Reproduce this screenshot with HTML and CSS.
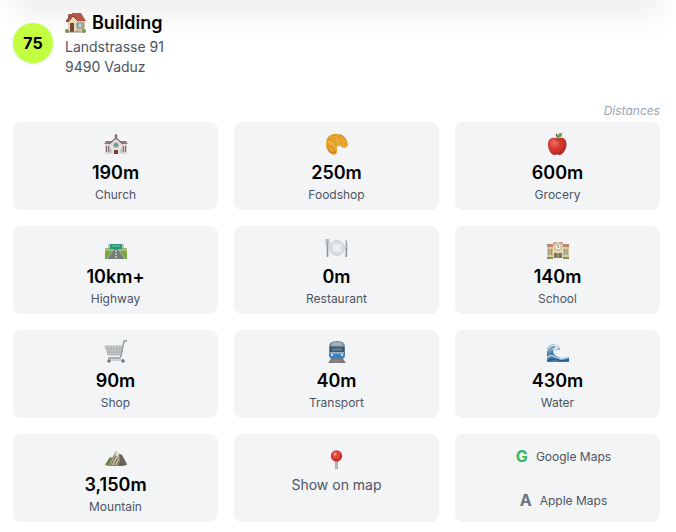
FILE: index.html
```html
<!DOCTYPE html>
<html lang="en">
<head>
<meta charset="utf-8">
<meta name="viewport" content="width=device-width, initial-scale=1">
<title>Building</title>
<link rel="stylesheet" href="styles.css">
</head>
<body>
<div class="top-edge"></div>
<main class="page">
  <header class="building">
    <div class="score">75</div>
    <div>
      <h1 class="title">
        <svg class="house" viewBox="0 0 22 22" aria-hidden="true">
          <path d="M3 2h3v5H3z" fill="#a86a58"/>
          <path d="M3 9 8 3l5 6v11H3z" fill="#ead8b3"/>
          <path d="M12 9h8v10l-7 1z" fill="#d8c397"/>
          <path d="M8 1h8l5 8h-8L8 4l-5 6-2-1z" fill="#b75549"/>
          <path d="M8 1 1 9l2 1 5-6 5 5" fill="none" stroke="#7d3834"/>
          <path d="M5 11h4v9H5z" fill="#76483a"/>
          <path d="M12 11h6v5h-6z" fill="#9eb7bd" stroke="#718c95"/>
          <path d="M15 11v5" stroke="#e0e6dc"/>
          <path d="M2 20h17" stroke="#92877a"/>
          <circle cx="2" cy="19" r="2" fill="#719552"/><circle cx="19" cy="19" r="2" fill="#719552"/><circle cx="12" cy="19" r="1" fill="#91a366"/>
        </svg>
        Building
      </h1>
      <address class="address">Landstrasse 91<br>9490 Vaduz</address>
    </div>
  </header>
  <p class="caption">Distances</p>
  <section class="grid" aria-label="Distances">
    <div class="card">
      <svg class="icon" viewBox="0 0 24 24" aria-hidden="true">
        <path d="M1 12h22v10H1z" fill="#ddd6d2"/>
        <path d="M0 12 2 9h20l2 3z" fill="#8d7d81"/>
        <path d="M6 12l6-6 6 6v10H6z" fill="#e6e1dc"/>
        <path d="m5 12 7-6 7 6" fill="none" stroke="#806c70" stroke-width="1.300"/>
        <path d="M12 2v5M10.500 4h3" stroke="#5d4e55" stroke-width="1.2"/>
        <circle cx="12" cy="13" r="2.600" fill="#719d91" stroke="#b9c4bd"/>
        <path d="M10 18h4v4h-4z" fill="#74433b"/>
        <path d="M2.500 14v6M4.800 14v6M19.200 14v6M21.500 14v6" stroke="#77646a" stroke-width="1.1"/>
        <path d="M7 17v4M17 17v4" stroke="#bba9a1"/>
      </svg>
      <strong class="value">190m</strong><span class="label">Church</span>
    </div>
    <div class="card">
      <svg class="icon" viewBox="0 0 24 24" aria-hidden="true">
        <path d="M9 23C4 22 0 16 1 11 1 5 6 1 12 2c6-1 11 5 11 11-1 3-4 4-6 2-2-1-4-2-5 0-1 3 2 6-3 8z" fill="#e7a42d"/>
        <path d="M2 8c4-2 7 0 9 5l-1 3C8 12 5 10 1 11M8 3c5-1 8 3 8 10l-3-1C13 7 11 4 8 3m8 0c5 2 6 6 5 11l-3 1c1-5 1-9-2-12" fill="#f0b441"/>
        <path d="M2 8c5-1 7 2 9 6M8 3c5 0 7 4 7 9M15 3c5 2 6 6 5 11M2 15c4-2 7 1 8 5" fill="none" stroke="#c78225" stroke-width=".9"/>
        <path d="M3 17c2 4 5 4 8 3" fill="none" stroke="#c98023" stroke-width="1.5"/>
      </svg>
      <strong class="value">250m</strong><span class="label">Foodshop</span>
    </div>
    <div class="card">
      <svg class="icon" viewBox="0 0 24 24" aria-hidden="true">
        <defs><radialGradient id="apple" cx=".35" cy=".3" r=".75"><stop offset="0" stop-color="#ef7164"/><stop offset=".45" stop-color="#d9392f"/><stop offset="1" stop-color="#b02723"/></radialGradient></defs>
        <path d="M11.500 7c4-3 9.500-1 9 6-.4 5-4 10-7 10-1 0-1.500-.6-2.500-.6s-1.500.6-2.500.6C5.500 23 2 18 2 13 1.500 6 7.500 4 11.500 7z" fill="url(#apple)"/>
        <path d="M8 7q4 3 7 0-3 1-7 0" fill="#942a22"/>
        <path d="M11.500 8q0-4-1.500-6" fill="none" stroke="#725034" stroke-width="1.300"/>
        <path d="M11 6c0-4 2-5 5-5 0 3-1 5-5 5z" fill="#63a747"/>
      </svg>
      <strong class="value">600m</strong><span class="label">Grocery</span>
    </div>
    <div class="card">
      <svg class="icon" viewBox="0 0 24 24" aria-hidden="true">
        <path d="M1 12h22v11H1z" fill="#78a744"/>
        <path d="M1 12h22v3H1z" fill="#a4bd79"/>
        <path d="M10 13h4l7 10H3z" fill="#747b7b"/>
        <path d="M12 14v9" stroke="#ece6cf" stroke-width="1.200" stroke-dasharray="2 1"/>
        <path d="M10 13 3 23M14 13l7 10" stroke="#bec3b1" stroke-width=".7"/>
        <path d="M5 14V8M19 14V8" stroke="#879a91"/>
        <path d="M6 8h12v5H6z" fill="#299579"/><path d="M8 10h8" stroke="#80c4af"/>
      </svg>
      <strong class="value">10km+</strong><span class="label">Highway</span>
    </div>
    <div class="card">
      <svg class="icon" viewBox="0 0 24 24" aria-hidden="true">
        <circle cx="12" cy="12" r="7.300" fill="#e1e3e5" stroke="#c3c7cb"/>
        <circle cx="12" cy="12" r="4.800" fill="#eceeef" stroke="#ced1d4" stroke-width=".8"/>
        <path d="M2.500 8v13" stroke="#9196a0" stroke-width="1.700"/>
        <path d="M1 3v5q1.500 2 3 0V3M2.500 3v5" fill="none" stroke="#9a9fa8" stroke-width=".9"/>
        <path d="M20.500 3q2 1 2 10h-2z" fill="#a5aab2"/><path d="M21.300 12v9" stroke="#9095a0" stroke-width="1.700"/>
      </svg>
      <strong class="value">0m</strong><span class="label">Restaurant</span>
    </div>
    <div class="card">
      <svg class="icon" viewBox="0 0 24 24" aria-hidden="true">
        <path d="M1 10h22v12H1z" fill="#dcc798"/>
        <path d="M1 8h6l1-2h8l1 2h6v3H1z" fill="#c18372"/>
        <path d="M7 9q5-6 10 0v13H7z" fill="#e6d6ad"/>
        <circle cx="12" cy="11" r="3.300" fill="#f4f1df" stroke="#beb08d"/>
        <path d="M12 9v2l1 1" fill="none" stroke="#625e51" stroke-width=".8"/>
        <path d="M3 13v6M5.500 13v6M18.500 13v6M21 13v6" stroke="#87958b" stroke-width="1.300"/>
        <path d="M8 17h8v5H8z" fill="#7b7463"/><path d="M12 17v5" stroke="#c8b182"/>
        <path d="M1 22h6M17 22h6" stroke="#819356" stroke-width="2"/>
      </svg>
      <strong class="value">140m</strong><span class="label">School</span>
    </div>
    <div class="card">
      <svg class="icon" viewBox="0 0 24 24" aria-hidden="true">
        <path d="M1 6h18l-2 9H4z" fill="#c9cccd"/>
        <path d="M1 6h18l-2 9H4zM4 6l2 9M7 6l1 9M10 6v9M13 6v9M16 6l-1 9M2 9h16M3 12h15" fill="none" stroke="#a6aaad" stroke-width=".7"/>
        <path d="M23 1h-3l-3 15-1 2H4" fill="none" stroke="#92969a" stroke-width="1.300"/>
        <path d="M4 20h16" stroke="#aaaeb2"/><circle cx="5" cy="21" r="1.800" fill="#74777b"/><circle cx="19" cy="21" r="1.800" fill="#74777b"/>
      </svg>
      <strong class="value">90m</strong><span class="label">Shop</span>
    </div>
    <div class="card">
      <svg class="icon" viewBox="0 0 24 24" aria-hidden="true">
        <path d="m7 17-4 6h18l-4-6z" fill="#92857d"/><path d="M7 19h10M5 22h14" stroke="#77706e"/>
        <path d="M8 17 5 23M16 17l3 6" stroke="#6e7175"/>
        <path d="M4 7q0-6 8-6t8 6v8q0 3-3 4H7q-3-1-3-4z" fill="#687c91"/>
        <path d="M6 6q0-3 3-4h6q3 1 3 4" fill="#a1afba"/>
        <path d="M5 7h14v5H5z" fill="#3d566c"/><path d="M7 8h10v3H7z" fill="#56778d"/>
        <path d="M4 13h16v2q0 2-3 3H7q-3-1-3-3z" fill="#397fc3"/>
        <path d="M5 13h14" stroke="#c6dcea"/><path d="M6 15h2M16 15h2" stroke="#fff" stroke-width="1.300"/>
      </svg>
      <strong class="value">40m</strong><span class="label">Transport</span>
    </div>
    <div class="card">
      <svg class="icon" viewBox="0 0 24 24" aria-hidden="true">
        <path d="M1 22V9q3-6 9-4 4 1 4 5l-2-1-1 2-2-2q-3 2-1 5 3 4 9 4l6-1v5z" fill="#437dab"/>
        <path d="M1 10q3-6 8-5 4 0 5 4l-2-1-1 3-2-2-2 2-1-1-2 3-2-1z" fill="#d5e5ed"/>
        <path d="M2 12q2-5 7-5M3 16q-1-4 4-7" fill="none" stroke="#608eb2" stroke-width="1.400"/>
        <path d="M1 18q4-5 9 0 5 2 13-1" fill="none" stroke="#b7d6e5" stroke-width="1.700"/>
        <path d="M2 21q7-4 13 0l8-1" fill="none" stroke="#245a8c" stroke-width="1.500"/>
      </svg>
      <strong class="value">430m</strong><span class="label">Water</span>
    </div>
    <div class="card">
      <svg class="icon" viewBox="0 0 24 24" aria-hidden="true">
        <path d="m1 21 5-8 2 1 4-7 3 3 3 1 5 9-4 2H4z" fill="#8b846f"/>
        <path d="m12 7-2 6-5 8h7l3-5 1-6z" fill="#c9baa1"/>
        <path d="m15 10 3 1 5 10-9 1 2-5z" fill="#66645a"/>
        <path d="m1 21 5-8 2 1-2 8z" fill="#7a9159"/>
        <path d="m7 21 5-9M10 21l4-7M3 20l3-5" stroke="#626d4e" stroke-width="1"/>
        <path d="m12 7 1 5 2-2" fill="#eee9df"/>
      </svg>
      <strong class="value">3,150m</strong><span class="label">Mountain</span>
    </div>
    <button class="card map-card" type="button">
      <svg class="icon" viewBox="0 0 24 24" aria-hidden="true">
        <path d="M11.500 12v9" stroke="#8f9499" stroke-width="2.400"/><path d="M11.500 12v9" stroke="#c1c4c7" stroke-width=".7"/>
        <circle cx="11.500" cy="8" r="5.700" fill="#c7302b"/><circle cx="11" cy="7" r="4" fill="#df4a40"/><circle cx="10" cy="6" r="1.500" fill="#f3a098"/>
      </svg>
      <span class="map-text">Show on map</span>
    </button>
    <div class="card links">
      <a class="link" href="#google"><b class="google">G</b>Google Maps</a>
      <a class="link" href="#apple-maps"><b class="apple">A</b>Apple Maps</a>
    </div>
  </section>
</main>
</body>
</html>
```
FILE: styles.css
```css
* { box-sizing: border-box; }
body { margin: 0; background: #fff; color: #000; font-family: Inter, "Liberation Sans", sans-serif; }
.top-edge { height: 0; margin: 0 24px; box-shadow: 0 0 32px 8px rgba(0, 0, 0, .15); }
.page { padding: 9px 16px 10px 13px; }
.building { display: flex; align-items: center; gap: 12px; }
.score { display: flex; align-items: center; justify-content: center; flex: none; width: 40px; height: 40px; border-radius: 50%; background: #c1ff40; box-shadow: 0 1px 3px rgba(0, 0, 0, .12); font-size: 16px; font-weight: 700; }
.title { display: flex; align-items: center; gap: 5px; margin: 0; font-size: 18px; line-height: 28px; font-weight: 600; }
.house { width: 22px; height: 22px; }
.address { color: #4b5563; font-size: 14px; line-height: 20px; font-style: normal; }
.caption { margin: 26px 0 3px; color: #9ca3af; font-size: 12px; line-height: 16px; font-style: italic; text-align: right; }
.grid { display: grid; grid-template-columns: repeat(3, 1fr); gap: 16px; }
.card { display: flex; flex-direction: column; align-items: center; min-height: 88px; padding: 9px 8px 7px; border: 0; border-radius: 8px; background: #f3f4f6; color: #4b5563; font-family: inherit; }
.icon { width: 24px; height: 24px; margin: 1px 0 3px; }
.value { color: #000; font-size: 18px; line-height: 28px; font-weight: 600; }
.label { font-size: 12px; line-height: 16px; }
.map-card { padding-top: 13px; padding-bottom: 3px; cursor: pointer; justify-content: flex-start; }
.map-text { font-size: 14px; line-height: 20px; }
.links { padding: 0; }
.link { display: flex; flex: 1; align-items: center; justify-content: center; gap: 8px; width: 100%; padding-left: 12px; color: #4b5563; font-size: 12px; text-decoration: none; }
.link b { font-size: 16px; }
.google { color: #35b967; }
.apple { color: #6b7280; }
```
